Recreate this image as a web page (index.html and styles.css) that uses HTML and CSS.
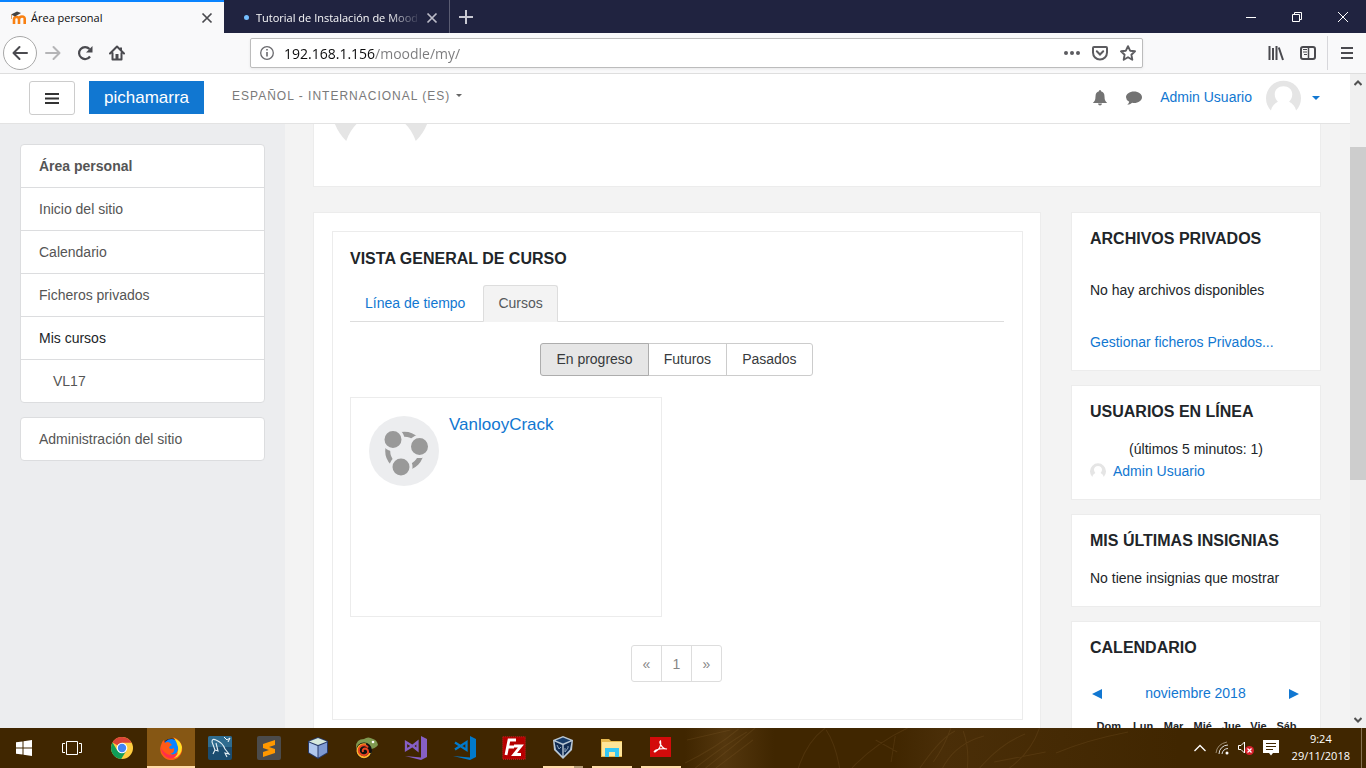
FILE: index.html
```html
<!DOCTYPE html>
<html lang="es">
<head>
<meta charset="utf-8">
<title>Área personal</title>
<link rel="stylesheet" href="styles.css">
</head>
<body>
<svg class="defs" aria-hidden="true">
  <symbol id="avatar" viewBox="0 0 100 100">
    <path fill="#e5e5e5" d="M14 87A50 50 0 1 1 86 87C83 75 76 67 66 62C72 56 75 50 75 41C75 27 64 18 50 18S25 27 25 41C25 50 28 56 34 62C24 67 17 75 14 87Z"/>
  </symbol>
</svg>
<div class="browser">
  <header class="tabstrip">
    <div class="tab tab-active">
      <svg class="favicon" viewBox="0 0 16 16"><path d="M4 14V9.500Q4 7 6.500 7T9 9.500V14M9 14V9.500Q9 6.500 12 6.500T14.700 9.500V14" fill="none" stroke="#f98012" stroke-width="2.600"/><path d="M1 4.500L7 1.500L11 3L5 6.500Z" fill="#444"/><path d="M1.500 4.500V9" stroke="#dba36c"/></svg>
      <span class="tab-title">Área personal</span>
      <button class="icon-btn" aria-label="Cerrar pestaña"><svg width="12" height="12" viewBox="0 0 12 12"><path d="M1.500 1.500L10.500 10.500M10.500 1.500L1.500 10.500" stroke="#4a4a4f" stroke-width="1.700"/></svg></button>
    </div>
    <div class="tab tab-back">
      <span class="loading-dot"></span>
      <span class="tab-title fade">Tutorial de Instalación de Mood</span>
      <button class="icon-btn" aria-label="Cerrar pestaña"><svg width="12" height="12" viewBox="0 0 12 12"><path d="M1.500 1.500L10.500 10.500M10.500 1.500L1.500 10.500" stroke="#bcbcc8" stroke-width="1.700"/></svg></button>
    </div>
    <button class="icon-btn new-tab" aria-label="Nueva pestaña"><svg width="14" height="14" viewBox="0 0 14 14"><path d="M7 0V14M0 7H14" stroke="#c8c8d2" stroke-width="2"/></svg></button>
    <div class="window-buttons">
      <button class="icon-btn" aria-label="Minimizar"><svg width="10" height="10" viewBox="0 0 10 10"><path d="M0 5.500H10" stroke="#fff"/></svg></button>
      <button class="icon-btn" aria-label="Restaurar"><svg width="10" height="10" viewBox="0 0 10 10"><path d="M.5 2.500H7.500V9.500H.5ZM2.500 2.500V.5H9.500V7.500H7.500" fill="none" stroke="#fff"/></svg></button>
      <button class="icon-btn" aria-label="Cerrar"><svg width="10" height="10" viewBox="0 0 10 10"><path d="M0 0L10 10M10 0L0 10" stroke="#fff"/></svg></button>
    </div>
  </header>

  <div class="toolbar">
    <div class="nav-buttons">
      <button class="icon-btn back" aria-label="Atrás"><svg width="16" height="16" viewBox="0 0 16 16"><path d="M15 8H2M7.500 2L1.500 8L7.500 14" fill="none" stroke="#4a4a4f" stroke-width="2" stroke-linecap="round" stroke-linejoin="round"/></svg></button>
      <button class="icon-btn" aria-label="Adelante"><svg width="16" height="16" viewBox="0 0 16 16"><path d="M1 8H14M8.500 2L14.500 8L8.500 14" fill="none" stroke="#b5b5b7" stroke-width="2" stroke-linecap="round" stroke-linejoin="round"/></svg></button>
      <button class="icon-btn" aria-label="Recargar"><svg width="16" height="16" viewBox="0 0 16 16"><path d="M13 11.500A6 6 0 1 1 12.500 4" fill="none" stroke="#4a4a4f" stroke-width="2.200"/><path d="M15.500 1V7.500H9Z" fill="#4a4a4f"/></svg></button>
      <button class="icon-btn" aria-label="Inicio"><svg width="16" height="16" viewBox="0 0 16 16"><path d="M1 8.500L8 1.500L15 8.500M3.500 8V14.500H12.500V8" fill="none" stroke="#4a4a4f" stroke-width="2" stroke-linejoin="round" stroke-linecap="round"/><path d="M6.500 14V9H9.500V14Z" fill="#4a4a4f"/><path d="M12 2.500V5" stroke="#4a4a4f" stroke-width="2"/></svg></button>
    </div>
    <div class="urlbar">
      <svg width="14" height="14" viewBox="0 0 14 14"><circle cx="7" cy="7" r="6.300" fill="none" stroke="#6a6a6e" stroke-width="1.300"/><path d="M7 6V10.500M7 3V4.600" stroke="#6a6a6e" stroke-width="1.600"/></svg>
      <input class="url" aria-label="Dirección" value="192.168.1.156/moodle/my/">
      <button class="icon-btn" aria-label="Acciones"><svg width="16" height="16" viewBox="0 0 16 16"><g fill="#5c5c60"><circle cx="2" cy="8" r="2"/><circle cx="8" cy="8" r="2"/><circle cx="14" cy="8" r="2"/></g></svg></button>
      <button class="icon-btn" aria-label="Pocket"><svg width="16" height="16" viewBox="0 0 16 16"><path d="M2 2H14Q15 2 15 3V7.500A7 7 0 0 1 1 7.500V3Q1 2 2 2Z" fill="none" stroke="#5c5c60" stroke-width="2"/><path d="M4.800 6.300L8 9.500L11.200 6.300" fill="none" stroke="#5c5c60" stroke-width="2" stroke-linecap="round"/></svg></button>
      <button class="icon-btn" aria-label="Marcador"><svg width="16" height="16" viewBox="0 0 16 16"><path d="M8 1.200L10.100 5.700L15 6.300L11.400 9.700L12.300 14.700L8 12.200L3.700 14.700L4.600 9.700L1 6.300L5.900 5.700Z" fill="none" stroke="#5c5c60" stroke-width="1.900" stroke-linejoin="round"/></svg></button>
    </div>
    <div class="tool-buttons">
      <button class="icon-btn" aria-label="Biblioteca"><svg width="16" height="16" viewBox="0 0 16 16"><path d="M1.500 1V15M5 3V15M8.500 1V15" stroke="#4a4a4f" stroke-width="2"/><path d="M10.800 2.500L15 15" stroke="#4a4a4f" stroke-width="2"/></svg></button>
      <button class="icon-btn" aria-label="Barra lateral"><svg width="16" height="16" viewBox="0 0 16 16"><rect x="1" y="2" width="14" height="12" rx="2" fill="none" stroke="#4a4a4f" stroke-width="2"/><path d="M8.500 2V14" stroke="#4a4a4f" stroke-width="1.500"/><path d="M3 4.500H7M3 7H7M4 9.500H7" stroke="#4a4a4f"/></svg></button>
      <span class="tool-sep"></span>
      <button class="icon-btn" aria-label="Menú"><svg width="14" height="14" viewBox="0 0 14 14"><path d="M1 2H13M1 7H13M1 12H13" stroke="#4a4a4f" stroke-width="2"/></svg></button>
    </div>
  </div>

  <div class="viewport">
    <div class="page">
      <nav class="navbar">
        <button class="menu-btn" aria-label="Panel lateral"><svg width="14" height="14" viewBox="0 0 14 14"><path d="M0 3H14M0 7.500H14M0 12H14" stroke="#333" stroke-width="2.200"/></svg></button>
        <a class="brand" href="#">pichamarra</a>
        <button class="lang">ESPAÑOL - INTERNACIONAL (ES)<span class="caret"></span></button>
        <div class="user-area">
          <button class="icon-btn" aria-label="Notificaciones"><svg width="16" height="16" viewBox="0 0 16 16"><path d="M8 0Q9 0 9 1.300Q12.500 2.300 12.500 6.500Q12.500 11 15.200 13H.8Q3.500 11 3.500 6.500Q3.500 2.300 7 1.300Q7 0 8 0ZM6 13.500H10Q9.800 15.500 8 15.500T6 13.500Z" fill="#737373"/></svg></button>
          <button class="icon-btn" aria-label="Mensajes"><svg width="16" height="14" viewBox="0 0 16 14"><path d="M8 .5C12.500 .5 16 3 16 6.200S12.500 12 8 12Q7 12 6.200 11.800Q4 13.700 1.300 13.800Q3 12.500 3.200 10.800Q0 9 0 6.200C0 3 3.500 .5 8 .5Z" fill="#737373"/></svg></button>
          <a class="user-link" href="#">Admin Usuario</a>
          <svg class="avatar-nav"><use href="#avatar"/></svg>
          <span class="caret caret-blue"></span>
        </div>
      </nav>
      <div class="columns">
        <nav class="drawer">
          <ul class="menu">
            <li><a class="current" href="#">Área personal</a></li>
            <li><a href="#">Inicio del sitio</a></li>
            <li><a href="#">Calendario</a></li>
            <li><a href="#">Ficheros privados</a></li>
            <li><span>Mis cursos</span></li>
            <li><a class="nested" href="#">VL17</a></li>
          </ul>
          <ul class="menu">
            <li><a href="#">Administración del sitio</a></li>
          </ul>
        </nav>
        <div class="main">
          <section class="profile-card"><svg class="profile-pic" viewBox="0 84 100 16" preserveAspectRatio="none"><path fill="#e5e5e5" d="M1 84H24Q17 90 13 100Q5 93 1 84ZM76 84H99Q95 93 87 100Q83 90 76 84Z"/></svg></section>
          <div class="blocks">
            <main class="region">
              <section class="overview">
                <h2>VISTA GENERAL DE CURSO</h2>
                <div class="page-tabs"><a href="#">Línea de tiempo</a><a class="selected" href="#">Cursos</a></div>
                <div class="filters"><button class="pressed">En progreso</button><button>Futuros</button><button>Pasados</button></div>
                <article class="course">
                  <svg width="70" height="70" viewBox="0 0 70 70"><circle cx="35" cy="35" r="35" fill="#ecedef"/><circle cx="35.500" cy="35" r="16.800" fill="none" stroke="#999" stroke-width="5"/><g fill="#999" stroke="#ecedef" stroke-width="3"><circle cx="24" cy="23.500" r="10"/><circle cx="50.500" cy="30.500" r="10"/><circle cx="32" cy="51" r="10"/></g></svg>
                  <a href="#">VanlooyCrack</a>
                </article>
                <nav class="pager" aria-label="Páginas"><a href="#">«</a><a href="#">1</a><a href="#">»</a></nav>
              </section>
            </main>
            <aside class="side">
              <section class="block">
                <h2>ARCHIVOS PRIVADOS</h2>
                <div class="files"><p>No hay archivos disponibles</p><a href="#">Gestionar ficheros Privados...</a></div>
              </section>
              <section class="block">
                <h2>USUARIOS EN LÍNEA</h2>
                <p class="centered">(últimos 5 minutos: 1)</p>
                <a class="online" href="#"><svg width="16" height="16"><use href="#avatar"/></svg>Admin Usuario</a>
              </section>
              <section class="block">
                <h2>MIS ÚLTIMAS INSIGNIAS</h2>
                <p>No tiene insignias que mostrar</p>
              </section>
              <section class="block">
                <h2>CALENDARIO</h2>
                <div class="month">
                  <a href="#" aria-label="Mes anterior"><svg width="10" height="10"><path d="M10 0V10L0 5Z" fill="#1177d1"/></svg></a>
                  <a href="#">noviembre 2018</a>
                  <a href="#" aria-label="Mes siguiente"><svg width="10" height="10"><path d="M0 0V10L10 5Z" fill="#1177d1"/></svg></a>
                </div>
                <table class="calendar"><thead><tr><th>Dom</th><th>Lun</th><th>Mar</th><th>Mié</th><th>Jue</th><th>Vie</th><th>Sáb</th></tr></thead></table>
              </section>
            </aside>
          </div>
        </div>
      </div>
    </div>
    <div class="scrollbar">
      <svg width="8" height="6" viewBox="0 0 8 6"><path d="M.5 5L4 1.500L7.500 5" fill="none" stroke="#505050" stroke-width="2"/></svg>
      <div class="track"><div class="thumb"></div></div>
      <svg width="8" height="6" viewBox="0 0 8 6"><path d="M.5 1L4 4.500L7.500 1" fill="none" stroke="#505050" stroke-width="2"/></svg>
    </div>
  </div>

  <footer class="taskbar">
    <div class="system">
      <button aria-label="Inicio"><svg width="16" height="16" viewBox="0 0 16 16"><path fill="#fff" d="M0 2.300L6.500 1.400V7.500H0ZM7.500 1.200L16 0V7.500H7.500ZM0 8.500H6.500V14.600L0 13.700ZM7.500 8.500H16V16L7.500 14.800Z"/></svg></button>
      <button aria-label="Vista de tareas"><svg width="20" height="14" viewBox="0 0 20 14"><path d="M4.500 .5H15.500V13.500H4.500ZM3 2.500H.5V11.500H3M17 2.500H19.500V11.500H17" fill="none" stroke="#fff"/></svg></button>
    </div>
    <div class="apps">
      <button aria-label="Chrome"><svg viewBox="0 0 24 24"><circle cx="12" cy="12" r="11" fill="#ffcd40"/><path d="M12 12L2.500 6.500A11 11 0 0 1 21.600 6.800H12Z" fill="#db4437"/><path d="M2.500 6.500A11 11 0 0 0 11.200 23L16.500 14.500L12 12L7.300 14.500Z" fill="#0f9d58"/><circle cx="12" cy="12" r="5.300" fill="#fff"/><circle cx="12" cy="12" r="4.200" fill="#4285f4"/></svg></button>
      <button class="focused" aria-label="Firefox"><svg viewBox="0 0 24 24"><circle cx="12.500" cy="12.500" r="10" fill="#20123a"/><circle cx="12.500" cy="11" r="8" fill="#0a84ff"/><path d="M2 9Q3 5 5 4L6 7Q9 5 11 7L13 9Q10 10 10 12Q12 14 15 12Q16 17 11 18Q18 20 19 13Q20 8 14 1Q22 4 23 11A11 11 0 1 1 2 9Z" fill="#ff5a16"/><path d="M15 2Q22 5 23 11Q23 20 15 22Q20 17 19 11Q18 6 15 2Z" fill="#ffe226"/><path d="M2 11Q2 20 11 22.500Q17 22 19 17Q14 21 8 18Q3 15 2 11Z" fill="#ff2d4d"/></svg></button>
      <button aria-label="MySQL Workbench"><svg viewBox="0 0 24 24"><rect width="24" height="24" rx="2" fill="#1b4d70"/><path d="M0 2Q0 0 2 0H22Q24 0 24 2V11H0Z" fill="#2f6c8f"/><path d="M5 18L7 14L4 6Q4 2 8 4Q15 7 17 13L21 18L17 17L19 21M8 7L10 15L7 14" fill="none" stroke="#e5f0f5" stroke-width="1.100"/><path d="M16 1L19 4L22 2L20 6" stroke="#fff" fill="none"/></svg></button>
      <button aria-label="Sublime Text"><svg viewBox="0 0 24 24"><rect width="24" height="24" rx="2" fill="#4b4b4b"/><path d="M18 4V9L12 11L18 13V17L6 21V16L12 14L6 12V8Z" fill="#ff9800"/></svg></button>
      <button aria-label="NetBeans"><svg viewBox="0 0 24 24"><path d="M12 1L22 5V17L12 23L2 17V5Z" fill="#273968"/><path d="M12 2L21 5.500L12 9L3 5.500Z" fill="#d7e9dd"/><path d="M3 6.500L11.500 10V21.500L3 16.500Z" fill="#b1c8ee"/><path d="M12.500 10L21 6.500V16.500L12.500 21.500Z" fill="#7e9ad2"/></svg></button>
      <button aria-label="Nativo"><svg viewBox="0 0 24 24"><path d="M1 11Q1 3 9 3Q13 0 18 3Q22 4 23 9Q20 13 15 13L17 18L13 14H1Z" fill="#7f9950"/><circle cx="9" cy="14.500" r="8" fill="#111"/><path d="M11 8.500A6.500 6.500 0 1 0 15 17" fill="none" stroke="#ffb52b" stroke-width="2"/><path d="M13 11.500A5 5 0 1 0 13 17Q13.500 13 10 12.500Q7 13 8 16" fill="none" stroke="#e84420" stroke-width="2"/><circle cx="18" cy="6" r="1.300" fill="#fff"/></svg></button>
      <button aria-label="Visual Studio"><svg viewBox="0 0 24 24"><path d="M17 0L23 3V21L17 24L1 20L17 21.500Z" fill="#865fc5"/><path d="M2 6V14L8.500 10L13.500 14V6L8.500 10Z" fill="none" stroke="#865fc5" stroke-width="2.300"/></svg></button>
      <button aria-label="Visual Studio Code"><svg viewBox="0 0 24 24"><path d="M17 0L23 3V21L17 24L0 20L17 21.500Z" fill="#0179cb"/><path d="M2 6.500L13.500 14V6L2 13.500" fill="none" stroke="#0179cb" stroke-width="2.300"/></svg></button>
      <button aria-label="FileZilla"><svg viewBox="0 0 24 24"><rect x=".8" y=".8" width="22.400" height="22.400" fill="#b50000" stroke="#cf2020" stroke-dasharray="1 1"/><path d="M4 19L7 4H14M6 11H12M12 10H19L12 18.500H19" fill="none" stroke="#fff" stroke-width="2.800"/></svg></button>
      <button class="running grouped" aria-label="VirtualBox"><svg viewBox="0 0 24 24"><path d="M12 0L22 4L21 14L12 23L3 14L2 4Z" fill="#b9c8d5"/><path d="M12 1.500L19.500 4.500L12 7.500L4.500 4.500Z" fill="#183c69"/><path d="M3.500 5.500L11.300 9V20L5 13.500ZM20.500 5.500L12.700 9V20L19 13.500Z" fill="#102b52"/><path d="M6 9L8 13L10 11M14 12V16L17 12V10" fill="none" stroke="#8ea6bd"/></svg></button>
      <button class="running" aria-label="Explorador de archivos"><svg viewBox="0 0 24 24"><path d="M1 3H9L11 5H22V21H1Z" fill="#e8b94f"/><path d="M2 6H22V20H2Z" fill="#ffe598"/><path d="M5 12H19V21H15V16H9V21H5Z" fill="#35c7f4"/></svg></button>
      <button class="running" aria-label="Adobe Reader"><svg viewBox="0 0 24 24"><rect x="1" y="1" width="21" height="20" fill="#d30b0b"/><path d="M6 16Q13 12 11.500 5Q10 6 12 9Q14 13 18 13Q13 12 7 14Q4 16 6 16Z" fill="none" stroke="#fff" stroke-width="1.200"/></svg></button>
    </div>
    <svg class="grain" viewBox="0 0 480 40" preserveAspectRatio="none" aria-hidden="true"><g fill="none" stroke="#8a6530" opacity=".22"><path d="M0 35Q30 20 52 1M10 40Q37 18 60 4M20 40Q45 20 68 0M2 12L44 2M30 40L66 12M110 40Q118 14 136 0M137 2Q146 16 150 40M162 40Q185 15 216 0M185 12L206 24M200 34L204 8M228 40Q248 10 262 3M241 34Q252 18 258 0M250 40Q262 16 290 8M270 3Q276 20 274 40M286 40Q306 16 330 6M300 34L350 24M315 40Q336 24 344 0M360 25Q390 12 430 4"/></g></svg>
    <div class="tray">
      <svg width="12" height="8" viewBox="0 0 12 8"><path d="M.5 7L6 1.500L11.500 7" fill="none" stroke="#fff" stroke-width="1.300"/></svg>
      <svg width="14" height="14" viewBox="0 0 14 14"><path d="M4 13A9 9 0 0 1 13 4M7 13A6 6 0 0 1 13 7.500" fill="none" stroke="#ddd"/><path d="M1 12Q2 3 12 1" fill="none" stroke="#9c8b70"/><circle cx="12" cy="12" r="1.500" fill="#fff"/></svg>
      <svg width="16" height="14" viewBox="0 0 16 14"><path d="M.5 4.500H3L6.500 1V12L3 8.500H.5Z" fill="none" stroke="#fff"/><circle cx="11.500" cy="9.500" r="4.500" fill="#d9202c"/><path d="M9.500 7.500L13.500 11.500M13.500 7.500L9.500 11.500" stroke="#fff" stroke-width="1.200"/></svg>
      <svg width="16" height="16" viewBox="0 0 16 16"><path d="M0 0H16V13H10L8 15.500L6 13H0Z" fill="#fff"/><path d="M3 3.500H13M3 6.500H13M3 9.500H10" stroke="#402600"/></svg>
      <div class="clock"><span>9:24</span><span>29/11/2018</span></div>
      <span class="show-desktop"></span>
    </div>
  </footer>
</div>
</body>
</html>
```

FILE: styles.css
```css
* { box-sizing: border-box; }
body { margin: 0; font: 14px/21px "Liberation Sans", Arial, sans-serif; color: #212529; }
button, input { font: inherit; }
button { padding: 0; border: 0; background: none; color: inherit; }
a { color: #1177d1; text-decoration: none; }
h2, p, ul { margin: 0; padding: 0; }
ul { list-style: none; }
svg { flex: none; display: block; }
.defs { position: absolute; width: 0; height: 0; }
.icon-btn { display: flex; align-items: center; justify-content: center; flex: none; }
.browser { display: flex; flex-direction: column; height: 100vh; overflow: hidden; }

/* Tabs */
.tabstrip { display: flex; flex: none; height: 33px; background: #202340; font: 11px/16px "Open Sans", "Noto Sans", sans-serif; }
.tab { display: flex; align-items: center; width: 226px; }
.tab-active { padding: 0 11px 0 10px; gap: 5px; width: 224px; background: #f9f9fa; border-top: 2px solid #0a84ff; color: #0c0c0d; }
.tab-back { padding: 2px 11px 0 20px; gap: 5px; border-right: 1px solid #5a5c72; color: #f9f9fa; }
.favicon { width: 16px; height: 16px; }
.tab-title { flex: 1; min-width: 0; white-space: nowrap; }
.fade { mask-image: linear-gradient(to right, #000 80%, transparent); }
.loading-dot { width: 5px; height: 5px; margin-right: 2px; border-radius: 50%; background: #75bfff; }
.new-tab { width: 32px; }
.window-buttons { display: flex; margin-left: auto; }
.window-buttons .icon-btn { width: 46px; }

/* Toolbar */
.toolbar { display: flex; flex: none; align-items: center; height: 41px; background: #f9f9fa; border-bottom: 1px solid #dedede; }
.nav-buttons { display: flex; align-items: center; gap: 16px; width: 250px; padding-left: 3px; }
.back { width: 34px; height: 34px; margin-right: -8px; border: 1px solid #a8a8a8; border-radius: 50%; background: #fff; }
.urlbar { display: flex; flex: 1; align-items: center; gap: 12px; height: 30px; padding: 0 6px 0 9px; border: 1px solid #bcbcbc; border-radius: 2px; background: #fff; box-shadow: 0 1px 3px #0001; }
.url { flex: 1; min-width: 0; padding: 2px 0 0; margin-left: -2px; border: 0; outline: 0; background: linear-gradient(to right, #0c0c0d 91px, #7a7a7c 91px); background-clip: text; -webkit-text-fill-color: transparent; font: 14px/20px "Open Sans", "Noto Sans", sans-serif; }
.tool-buttons { display: flex; align-items: center; gap: 16px; padding: 0 12px 0 125px; }
.tool-sep { width: 1px; height: 34px; margin: 0 -4px 0 -5px; background: #d7d7db; }

/* Page frame */
.viewport { display: flex; flex: 1; min-height: 0; }
.page { display: flex; flex: 1; flex-direction: column; min-width: 0; }
.navbar { display: flex; flex: none; align-items: center; height: 50px; padding: 0 30px 2px 29px; background: #fff; border-bottom: 1px solid #e3e3e3; }
.menu-btn { display: flex; align-items: center; justify-content: center; width: 46px; height: 34px; margin-right: 14px; border: 1px solid #ccc; border-radius: 3px; }
.brand { padding: 5px 15px 4px; background: #1177d1; color: #fff; font-size: 17px; line-height: 24px; }
.lang { display: flex; align-items: center; gap: 6px; margin: 0 0 4px 28px; color: #7a7a7a; font-size: 12px; line-height: 20px; letter-spacing: 1px; }
.caret { border: 3px solid transparent; border-top-color: #666; border-bottom: 0; }
.caret-blue { border-width: 4px; border-bottom: 0; border-top-color: #1177d1; margin-left: -3px; }
.user-area { display: flex; align-items: center; gap: 14px; margin-left: auto; }
.user-area .icon-btn { margin-right: 4px; }
.avatar-nav { width: 35px; height: 35px; }
.columns { display: flex; flex: 1; min-height: 0; overflow: hidden; }

/* Drawer */
.drawer { flex: none; width: 285px; padding: 20px; background: #ecedef; }
.menu { margin-bottom: 14px; border: 1px solid #dcdddf; border-radius: 4px; overflow: hidden; background: #fff; }
.menu li + li { border-top: 1px solid #dcdddf; }
.menu a, .menu span { display: block; padding: 11px 18px 10px; }
.menu a { color: #555; }
.menu .current { font-weight: bold; }
.menu .nested { padding-left: 32px; }

/* Content */
.main { flex: 1; min-width: 0; padding: 0 29px 0 28px; background: #f3f3f3; }
.profile-card { height: 63px; margin-bottom: 25px; padding-left: 20px; border: 1px solid #ececec; border-top: 0; background: #fff; }
.profile-pic { width: 94px; height: 17px; }
.blocks { display: flex; align-items: flex-start; gap: 30px; }
.region { flex: 1; min-width: 0; padding: 18px 17px 40px 18px; border: 1px solid #ececec; background: #fff; }
.overview { padding: 15px 18px 37px 17px; border: 1px solid #ececec; }
h2 { font-size: 16px; line-height: 24px; }
.page-tabs { display: flex; margin-top: 14px; border-bottom: 1px solid #ddd; }
.page-tabs a { padding: 8px 15px 7px; }
.page-tabs .selected { margin: 0 0 -1px 3px; padding: 7px 14px; border: 1px solid #ddd; border-bottom-color: #f3f3f3; border-radius: 3px 3px 0 0; background: #f3f3f3; color: #55595c; }
.filters { display: flex; justify-content: center; margin: 21px 0; }
.filters button { padding: 5px 15px; border: 1px solid #ccc; margin-left: -1px; color: #373a3c; }
.filters button:first-child { border-radius: 3px 0 0 3px; }
.filters button:last-child { border-radius: 0 3px 3px 0; }
.filters .pressed { position: relative; background: #e6e6e6; border-color: #adadad; }
.course { display: flex; align-items: flex-start; gap: 10px; width: calc(50% - 15px); min-height: 220px; padding: 18px; border: 1px solid #ececec; }
.course a { font-size: 17px; line-height: 18px; }
.pager { display: flex; justify-content: center; margin-top: 28px; }
.pager a { width: 31px; padding: 8px 0 6px; border: 1px solid #ddd; margin-left: -1px; color: #868686; text-align: center; }
.pager a:first-child { border-radius: 3px 0 0 3px; }
.pager a:last-child { border-radius: 0 3px 3px 0; }

/* Side blocks */
.side { display: flex; flex: none; flex-direction: column; gap: 14px; width: 250px; }
.block { padding: 14px 18px 17px; border: 1px solid #ececec; background: #fff; }
.block h2 { margin-bottom: 15px; }
.files { display: flex; flex-direction: column; gap: 31px; padding-top: 14px; }
.centered { text-align: center; }
.online { display: flex; align-items: center; gap: 7px; line-height: 22px; }
.month { display: flex; align-items: center; justify-content: space-between; margin-top: 23px; padding: 0 3px 0 2px; }
.calendar { width: 100%; margin-top: 12px; border-collapse: collapse; font-size: 11px; line-height: 20px; }
.calendar th { padding: 0; }
.scrollbar { display: flex; flex: none; flex-direction: column; align-items: center; width: 16px; padding: 6px 0 5px; background: #f0f0f0; }
.track { flex: 1; width: 100%; padding-top: 61px; }
.thumb { height: 333px; background: #cdcdcd; }

/* Taskbar */
.taskbar { display: flex; flex: none; height: 40px; background: #402600; color: #fff; }
.system, .apps { display: flex; }
.system { margin-right: 2px; }
.system button { display: flex; align-items: center; justify-content: center; width: 48px; }
.apps { gap: 1px; }
.apps button { display: flex; align-items: center; justify-content: center; width: 48px; }
.apps svg { width: 24px; height: 24px; }
.focused { background: #865714; box-shadow: inset 0 -2px #ffdca8; }
.running { background: linear-gradient(#ffdca8, #ffdca8) bottom / 40px 2px no-repeat; }
.grouped { background: linear-gradient(to right, #ffdca8 31px, #b69c75 31px) bottom / 40px 2px no-repeat; }
.grain { flex: 1; min-width: 0; height: 40px; background: linear-gradient(to right, #402600, #54370e 8%, #402600 18%, #402600 42%, #4a2e08 52%, #402600); }
.tray { display: flex; align-items: center; gap: 9px; padding-left: 14px; font: 11px/17px "Open Sans", "Noto Sans", sans-serif; }
.clock { display: flex; flex-direction: column; align-items: center; padding: 0 2px 2px 4px; }
.show-desktop { width: 5px; height: 40px; border-left: 1px solid #857052; }
```
